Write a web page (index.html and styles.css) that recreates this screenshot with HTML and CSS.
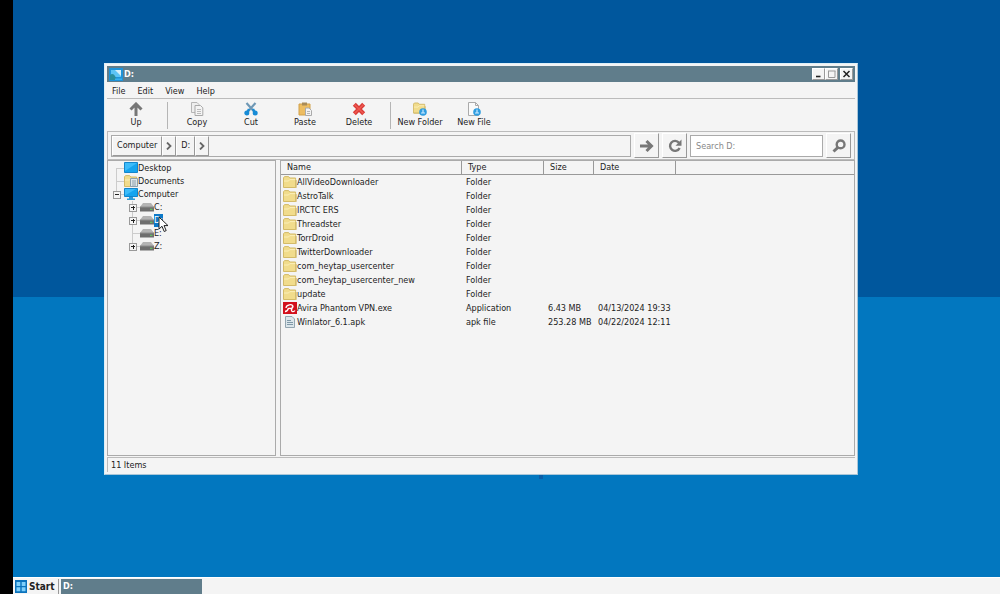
FILE: index.html
```html
<!DOCTYPE html>
<html lang="en">
<head>
    <meta charset="UTF-8">
    <meta name="viewport" content="width=device-width, initial-scale=1.0">
    <title>D:</title>
    <link rel="stylesheet" href="styles.css">
</head>
<body>
    <!-- Shared icons -->
    <svg class="icon-defs" aria-hidden="true">
        <symbol id="icon-folder" viewBox="0 0 14 12">
            <path d="M.5 11.5V1.8L1.5.6H5.6L6.8 2H12.6V11.5Z" fill="#f1dc8c" stroke="#d3ba68"/>
            <path d="M1 5H5.5L6.8 3.6H12.2" fill="none" stroke="#fbefb9"/>
            <path d="M13.3 4V11.6H1" fill="none" stroke="#d3ba68" stroke-width=".8"/>
        </symbol>
        <symbol id="icon-drive" viewBox="0 0 14 10">
            <path d="M3 1H11L14 5H0Z" fill="#b3b3b3"/>
            <path d="M0 5H14V9.5H0Z" fill="#6e6e6e"/>
            <path d="M0 5H14" stroke="#8d8d8d"/>
            <path d="M10 7.3H12.4" stroke="#63d063"/>
        </symbol>
        <symbol id="icon-screen" viewBox="0 0 14 12">
            <path d="M.5 .5H13.5V10.5H.5Z" fill="#16a4ee" stroke="#1385cb"/>
            <path d="M1 1H13L1 9Z" fill="#3cbcfa"/>
        </symbol>
        <symbol id="icon-computer" viewBox="0 0 14 12">
            <path d="M.5 .5H13.5V8.5H.5Z" fill="#16a4ee" stroke="#1385cb"/>
            <path d="M1 1H12L1 7.5Z" fill="#3cbcfa"/>
            <path d="M5 9H9V10.5H11V12H3V10.5H5Z" fill="#2c9bd8"/>
        </symbol>
        <symbol id="icon-badge" viewBox="0 0 8 8">
            <circle cx="4" cy="4" r="3.8" fill="#2f9de0"/>
            <path d="M4 1.5V5M2 5H6" stroke="#cceaff" stroke-width="1.2"/>
        </symbol>
    </svg>

    <main class="desktop">
        <span class="wallpaper-mark"></span>

        <section class="window">
            <header class="title-bar">
                <svg class="title-icon" viewBox="0 0 14 13">
                    <path d="M0 0H14V13H0Z" fill="#1f93d8"/>
                    <path d="M2 2H12V9H2Z" fill="#5cc4f5"/>
                    <path d="M6 2H12V8Z" fill="#d5f0fb"/>
                    <path d="M1 7C3 5 5 6 6 8L8 12H1Z" fill="#2a8d9b"/>
                    <path d="M6 10.5H13V12H6Z" fill="#35b0f0"/>
                </svg>
                <h1>D:</h1>
                <button type="button" aria-label="Minimize"><svg viewBox="0 0 11 10"><path d="M3 7.5H7.5" stroke="#222" stroke-width="1.6"/></svg></button>
                <button type="button" aria-label="Maximize"><svg viewBox="0 0 11 10"><path d="M2.5 2V8.5H9V2M2 2H9.5" fill="none" stroke="#999"/></svg></button>
                <button type="button" class="close" aria-label="Close"><svg viewBox="0 0 11 10"><path d="M2.5 2L8.5 8M8.5 2L2.5 8" stroke="#222" stroke-width="1.5"/></svg></button>
            </header>

            <nav class="menu-bar">
                <button type="button">File</button>
                <button type="button">Edit</button>
                <button type="button">View</button>
                <button type="button">Help</button>
            </nav>

            <div class="toolbar">
                <button type="button">
                    <svg viewBox="0 0 14 14"><path d="M7 14V3M1.5 7.5L7 2L12.5 7.5" fill="none" stroke="#777" stroke-width="3"/></svg>
                    Up
                </button>
                <span class="separator"></span>
                <button type="button">
                    <svg viewBox="0 0 14 14">
                        <path d="M1.5 .5H7L9 2.5V10.5H1.5Z" fill="#eee" stroke="#b5b5b5"/>
                        <path d="M5 3.5H10.5L12.8 5.8V13.5H5Z" fill="#f4f4f4" stroke="#a8a8a8"/>
                        <path d="M7 7.5H11M7 9.5H11M7 11.5H11" stroke="#bbb"/>
                    </svg>
                    Copy
                </button>
                <button type="button">
                    <svg viewBox="0 0 14 14">
                        <path d="M2.5 1L10.5 10M11.5 1L3.5 10" stroke="#6f98b5" stroke-width="2.2"/>
                        <path d="M5 7L2.5 12M9 7L11.5 12" stroke="#168bd6" stroke-width="2.4"/>
                        <circle cx="2.8" cy="11" r="1.6" fill="none" stroke="#168bd6" stroke-width="1.8"/>
                        <circle cx="11.2" cy="11" r="1.6" fill="none" stroke="#168bd6" stroke-width="1.8"/>
                    </svg>
                    Cut
                </button>
                <button type="button">
                    <svg viewBox="0 0 14 14">
                        <path d="M1 2H12V13H1Z" fill="#edbd62" stroke="#d2a14b"/>
                        <path d="M4 .5H9V3.5H4Z" fill="#a98b57"/>
                        <path d="M7.5 6H11L13.5 8.5V13.5H7.5Z" fill="#f3f3f3" stroke="#aaa"/>
                        <path d="M9 9.5H12M9 11.5H12" stroke="#b5b5b5"/>
                    </svg>
                    Paste
                </button>
                <button type="button">
                    <svg viewBox="0 0 14 14"><path d="M2.3 2.3L11.7 11.7M11.7 2.3L2.3 11.7" stroke="#d93a36" stroke-width="4.2"/><path d="M2.5 2.5L11.5 11.5M11.5 2.5L2.5 11.5" stroke="#ef5a52" stroke-width="1.5"/></svg>
                    Delete
                </button>
                <span class="separator"></span>
                <button type="button">
                    <svg viewBox="0 0 14 14">
                        <use href="#icon-folder" width="13" height="12"/>
                        <use href="#icon-badge" x="6" y="6" width="8" height="8"/>
                    </svg>
                    New Folder
                </button>
                <button type="button">
                    <svg viewBox="0 0 14 14">
                        <path d="M1.5 .5H8.5L11.5 3.5V13.5H1.5Z" fill="#fafafa" stroke="#aaa"/>
                        <path d="M8.5 .5V3.5H11.5" fill="none" stroke="#aaa"/>
                        <use href="#icon-badge" x="6" y="6" width="8" height="8"/>
                    </svg>
                    New File
                </button>
            </div>

            <div class="address-bar">
                <div class="path">
                    <button type="button" class="crumb">Computer</button>
                    <button type="button" class="arrow" aria-label="Expand Computer"><svg viewBox="0 0 6 8"><path d="M1 .5L4.5 4L1 7.5" fill="none" stroke="#666" stroke-width="1.8"/></svg></button>
                    <button type="button" class="crumb">D:</button>
                    <button type="button" class="arrow" aria-label="Expand D:"><svg viewBox="0 0 6 8"><path d="M1 .5L4.5 4L1 7.5" fill="none" stroke="#666" stroke-width="1.8"/></svg></button>
                </div>
                <button type="button" class="tool" aria-label="Go"><svg viewBox="0 0 14 14"><path d="M0 7H11M6.5 2L11.5 7L6.5 12" fill="none" stroke="#777" stroke-width="3"/></svg></button>
                <button type="button" class="tool" aria-label="Refresh"><svg viewBox="0 0 14 14"><path d="M11 3.8A5 5 0 1 0 11.6 9" fill="none" stroke="#777" stroke-width="2.4"/><path d="M13.5 .5V6.8H7.5Z" fill="#777"/></svg></button>
                <input type="text" class="search" placeholder="Search D:" aria-label="Search D:">
                <button type="button" class="tool" aria-label="Search"><svg viewBox="0 0 14 14"><circle cx="8.6" cy="5.4" r="3.9" fill="none" stroke="#777" stroke-width="2.4"/><path d="M6 8.4L1.5 12.5" stroke="#777" stroke-width="3"/></svg></button>
            </div>

            <div class="content">
                <aside class="tree">
                    <ul>
                        <li><span class="branch first"></span><svg><use href="#icon-screen"/></svg>Desktop</li>
                        <li>
                            <span class="branch"></span>
                            <svg viewBox="0 0 14 12">
                                <use href="#icon-folder" width="14" height="12"/>
                                <path d="M6.5 3.5H13.5V11.5H6.5Z" fill="#dfe6ea" stroke="#8fa0ab"/>
                                <path d="M8 6H12M8 8H12M8 10H12" stroke="#8fa0ab"/>
                            </svg>
                            Documents
                        </li>
                        <li><span class="branch last"><button type="button" class="toggle open" aria-label="Collapse Computer"></button></span><svg><use href="#icon-computer"/></svg>Computer</li>
                    </ul>
                    <ul class="drives">
                        <li><span class="branch"><button type="button" class="toggle" aria-label="Expand C:"></button></span><svg><use href="#icon-drive"/></svg>C:</li>
                        <li><span class="branch"><button type="button" class="toggle" aria-label="Expand D:"></button></span><svg><use href="#icon-drive"/></svg><span class="selected">D:</span>
                            <svg class="cursor" viewBox="0 0 11 17"><path d="M1 1V13L4 10.3L6.2 15.5L8.2 14.6L6 9.6H10Z" fill="#fff" stroke="#222"/></svg>
                        </li>
                        <li><span class="branch"></span><svg><use href="#icon-drive"/></svg>E:</li>
                        <li><span class="branch last"><button type="button" class="toggle" aria-label="Expand Z:"></button></span><svg><use href="#icon-drive"/></svg>Z:</li>
                    </ul>
                </aside>

                <div class="files">
                    <table>
                        <thead>
                            <tr><th class="name">Name</th><th class="type">Type</th><th class="size">Size</th><th class="date">Date</th><th></th></tr>
                        </thead>
                        <tbody>
                            <tr><td><svg><use href="#icon-folder"/></svg>AllVideoDownloader</td><td>Folder</td><td></td><td></td><td></td></tr>
                            <tr><td><svg><use href="#icon-folder"/></svg>AstroTalk</td><td>Folder</td><td></td><td></td><td></td></tr>
                            <tr><td><svg><use href="#icon-folder"/></svg>IRCTC ERS</td><td>Folder</td><td></td><td></td><td></td></tr>
                            <tr><td><svg><use href="#icon-folder"/></svg>Threadster</td><td>Folder</td><td></td><td></td><td></td></tr>
                            <tr><td><svg><use href="#icon-folder"/></svg>TorrDroid</td><td>Folder</td><td></td><td></td><td></td></tr>
                            <tr><td><svg><use href="#icon-folder"/></svg>TwitterDownloader</td><td>Folder</td><td></td><td></td><td></td></tr>
                            <tr><td><svg><use href="#icon-folder"/></svg>com_heytap_usercenter</td><td>Folder</td><td></td><td></td><td></td></tr>
                            <tr><td><svg><use href="#icon-folder"/></svg>com_heytap_usercenter_new</td><td>Folder</td><td></td><td></td><td></td></tr>
                            <tr><td><svg><use href="#icon-folder"/></svg>update</td><td>Folder</td><td></td><td></td><td></td></tr>
                            <tr>
                                <td><svg viewBox="0 0 14 12"><path d="M0 0H14V12H0Z" fill="#d2101c"/><path d="M2 9.5C4 9.5 5 8 5.5 6M3 6C3 2.5 9.5 1.5 10 4.5C10 6.5 7.5 7 5.5 6M9.5 4.5L8.5 8C8.3 10 11 10 12 8.5" fill="none" stroke="#fff" stroke-width="1.3"/></svg>Avira Phantom VPN.exe</td>
                                <td>Application</td><td>6.43 MB</td><td>04/13/2024 19:33</td><td></td>
                            </tr>
                            <tr>
                                <td><svg viewBox="0 0 14 12"><path d="M2.5 .5H9L11.5 3V11.5H2.5Z" fill="#dbe5ea" stroke="#93a5b0"/><path d="M4 4.5H8M4 6.5H10M4 8.5H10" stroke="#7f98a7"/></svg>Winlator_6.1.apk</td>
                                <td>apk file</td><td>253.28 MB</td><td>04/22/2024 12:11</td><td></td>
                            </tr>
                        </tbody>
                    </table>
                </div>
            </div>

            <footer class="status-bar">11 Items</footer>
        </section>
    </main>

    <footer class="taskbar">
        <button type="button" class="start">
            <svg viewBox="0 0 12 13"><path d="M0 0H12V13H0Z" fill="#0b73bd"/><path d="M1.5 2H5.3V6H1.5ZM6.7 2H10.5V6H6.7ZM1.5 7.3H5.3V11.3H1.5ZM6.7 7.3H10.5V11.3H6.7Z" fill="#7fd0fb"/></svg>
            Start
        </button>
        <button type="button" class="task">D:</button>
    </footer>
</body>
</html>
```
FILE: styles.css
```css
* {
    box-sizing: border-box;
}
body {
    display: flex;
    flex-direction: column;
    height: 100vh;
    margin: 0;
    padding-left: 13px;
    overflow: hidden;
    background: #000;
    color: #222;
    font: 9px/13px "DejaVu Sans Condensed", Tahoma, "DejaVu Sans", sans-serif;
}
button {
    margin: 0;
    padding: 0;
    border: none;
    background: none;
    color: inherit;
    font: inherit;
}
svg {
    flex: none;
}
.icon-defs {
    position: absolute;
    width: 0;
    height: 0;
}

/* Desktop */
.desktop {
    position: relative;
    flex: 1;
    background: linear-gradient(#00579d 0 297px, #0277bf 297px);
}
.wallpaper-mark {
    position: absolute;
    left: 526px;
    bottom: 98px;
    width: 4px;
    height: 4px;
    background: #0a5ea8;
}
.window {
    position: absolute;
    inset: 63px 142px 102px 91px;
    display: flex;
    flex-direction: column;
    padding: 2px;
    border: 1px solid #a9c6d8;
    border-top-color: #dceff8;
    border-left-color: #dceff8;
    background: #f4f4f4;
}

/* Title bar */
.title-bar {
    display: flex;
    align-items: center;
    height: 16px;
    padding: 0 2px;
    background: #607d8b;
}
.title-icon {
    width: 14px;
    height: 13px;
}
.title-bar h1 {
    flex: 1;
    margin: 0 0 0 1px;
    color: #fff;
    font-size: 9px;
}
.title-bar button {
    display: flex;
    width: 13px;
    height: 12px;
    border: 1px solid #fff;
    border-right-color: #999;
    border-bottom-color: #999;
    background: #f4f4f4;
}
.title-bar .close {
    margin-left: 2px;
}

/* Menu */
.menu-bar {
    display: flex;
    gap: 12px;
    height: 17px;
    padding: 3px 5px 0;
    border-bottom: 1px solid #bbb;
}

/* Toolbar */
.toolbar {
    display: flex;
    height: 32px;
    padding: 3px 2px 0;
}
.toolbar button {
    display: flex;
    flex-direction: column;
    align-items: center;
    width: 54px;
    white-space: nowrap;
}
.toolbar svg {
    width: 14px;
    height: 14px;
}
.separator {
    width: 1px;
    height: 27px;
    margin: 0 2px 0 4px;
    background: #b5b5b5;
}

/* Address bar */
.address-bar {
    display: flex;
    align-items: center;
    gap: 3px;
    height: 29px;
    padding: 0 3px;
    border: 1px solid #bbb;
}
.path {
    display: flex;
    flex: 1;
    height: 22px;
    border: 1px solid #aaa;
}
.path button,
.tool {
    display: flex;
    align-items: center;
    justify-content: center;
    border: 1px solid #fff;
    border-right-color: #999;
    border-bottom-color: #999;
}
.crumb {
    padding: 0 4px;
}
.arrow {
    width: 14px;
}
.arrow svg {
    width: 6px;
    height: 8px;
}
.tool {
    width: 25px;
    height: 25px;
}
.tool svg {
    width: 14px;
    height: 14px;
}
.search {
    width: 133px;
    height: 22px;
    padding: 0 5px;
    border: 1px solid #aaa;
    background: #fff;
    font: inherit;
}
.search::placeholder {
    color: #888;
}

/* Panes */
.content {
    display: flex;
    flex: 1;
    gap: 4px;
    min-height: 0;
}
.tree,
.files {
    border: 1px solid #aaa;
}
.tree {
    width: 169px;
    padding: 1px 0 0 2px;
}
.tree ul {
    margin: 0;
    padding: 0;
    list-style: none;
}
.tree .drives {
    padding-left: 16px;
}
.tree li {
    display: flex;
    position: relative;
    height: 13px;
}
.tree li > svg {
    width: 14px;
    height: 12px;
}
.branch {
    position: relative;
    display: flex;
    align-items: center;
    justify-content: center;
    width: 14px;
}
/* connector: down the middle, then across to the icon */
.branch::before {
    content: "";
    position: absolute;
    inset: 0 auto 0 6px;
    border-left: 1px solid #ccc;
}
.branch.first::before {
    top: 6px;
}
.branch.last::before {
    bottom: 6px;
}
.branch::after {
    content: "";
    position: absolute;
    inset: 6px 0 auto 6px;
    border-top: 1px solid #ccc;
}
.toggle {
    position: relative;
    z-index: 1;
    width: 8px;
    height: 8px;
    border: 1px solid #999;
    background:
        linear-gradient(#222, #222) center / 4px 1px no-repeat,
        linear-gradient(#222, #222) center / 1px 4px no-repeat,
        #f4f4f4;
}
.toggle.open {
    background: linear-gradient(#222, #222) center / 4px 1px no-repeat, #f4f4f4;
}
.selected {
    background: #0b78c8;
    color: #fff;
}
.tree .cursor {
    position: absolute;
    left: 32px;
    top: 2px;
    z-index: 2;
    width: 11px;
    height: 17px;
}

/* File list */
.files {
    flex: 1;
}
table {
    width: 100%;
    border-collapse: separate;
    border-spacing: 0;
    table-layout: fixed;
}
th {
    height: 14px;
    padding: 0 6px;
    border-right: 1px solid #999;
    border-bottom: 1px solid #999;
    font-weight: normal;
    text-align: left;
}
th:last-child {
    border-right: none;
}
.name {
    width: 181px;
}
.type {
    width: 82px;
}
.size {
    width: 50px;
}
.date {
    width: 82px;
}
td {
    height: 14px;
    padding: 0 0 0 4px;
    line-height: 14px;
    white-space: nowrap;
}
td:first-child {
    padding-left: 2px;
}
td svg {
    width: 14px;
    height: 12px;
    margin-top: 1px;
    vertical-align: top;
}

.status-bar {
    height: 15px;
    margin-top: 1px;
    padding: 1px 3px 0;
    border-top: 1px solid #bbb;
    border-left: 1px solid #bbb;
}

/* Taskbar */
.taskbar {
    display: flex;
    height: 17px;
    padding: 1px 2px 0;
    border-top: 1px solid #fff;
    background: #f4f4f4;
    font-weight: bold;
}
.start {
    display: flex;
    align-items: center;
    gap: 2px;
    width: 44px;
    border-right: 1px solid #999;
    font-size: 10px;
}
.start svg {
    width: 12px;
    height: 13px;
}
.task {
    width: 141px;
    margin-left: 2px;
    padding-left: 2px;
    background: #607d8b;
    color: #fff;
    text-align: left;
}
```
